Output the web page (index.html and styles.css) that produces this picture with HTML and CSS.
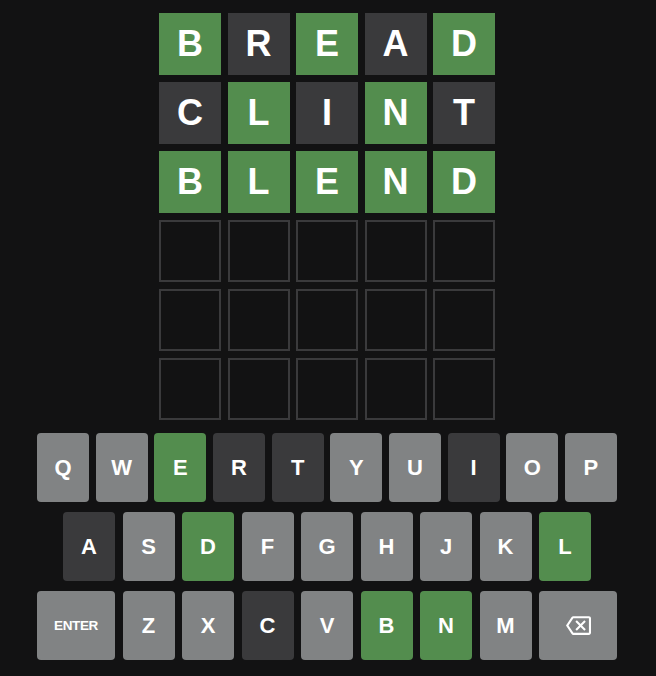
FILE: index.html
```html
<!DOCTYPE html>
<html>
<head>
<meta charset="utf-8">
<link rel="stylesheet" href="styles.css">
</head>
<body>
<div class="app">
  <div class="board">
    <div class="row">
      <div class="tile correct">B</div><div class="tile absent">R</div><div class="tile correct">E</div><div class="tile absent">A</div><div class="tile correct">D</div>
    </div>
    <div class="row">
      <div class="tile absent">C</div><div class="tile correct">L</div><div class="tile absent">I</div><div class="tile correct">N</div><div class="tile absent">T</div>
    </div>
    <div class="row">
      <div class="tile correct">B</div><div class="tile correct">L</div><div class="tile correct">E</div><div class="tile correct">N</div><div class="tile correct">D</div>
    </div>
    <div class="row">
      <div class="tile empty"></div><div class="tile empty"></div><div class="tile empty"></div><div class="tile empty"></div><div class="tile empty"></div>
    </div>
    <div class="row">
      <div class="tile empty"></div><div class="tile empty"></div><div class="tile empty"></div><div class="tile empty"></div><div class="tile empty"></div>
    </div>
    <div class="row">
      <div class="tile empty"></div><div class="tile empty"></div><div class="tile empty"></div><div class="tile empty"></div><div class="tile empty"></div>
    </div>
  </div>
  <div class="keyboard">
    <div class="krow krow1">
      <div class="key">Q</div><div class="key">W</div><div class="key correct">E</div><div class="key absent">R</div><div class="key absent">T</div><div class="key">Y</div><div class="key">U</div><div class="key absent">I</div><div class="key">O</div><div class="key">P</div>
    </div>
    <div class="krow">
      <div class="key absent">A</div><div class="key">S</div><div class="key correct">D</div><div class="key">F</div><div class="key">G</div><div class="key">H</div><div class="key">J</div><div class="key">K</div><div class="key correct">L</div>
    </div>
    <div class="krow">
      <div class="key wide enter">ENTER</div><div class="key">Z</div><div class="key">X</div><div class="key absent">C</div><div class="key">V</div><div class="key correct">B</div><div class="key correct">N</div><div class="key">M</div>
      <div class="key wide">
        <svg class="bksp" viewBox="0 0 24 24" width="25" height="25" aria-hidden="true"><path fill="#ffffff" d="M22 3H7c-.69 0-1.23.35-1.59.88L0 12l5.41 8.11c.36.53.9.89 1.59.89h15c1.1 0 2-.9 2-2V5c0-1.1-.9-2-2-2zm0 16H7.07L2.4 12l4.66-7H22v14zm-11.59-2L14 13.410 17.59 17 19 15.590 15.410 12 19 8.410 17.590 7 14 10.590 10.410 7 9 8.410 12.590 12 9 15.590z"/></svg>
      </div>
    </div>
  </div>
</div>
</body>
</html>
```

FILE: styles.css
```css
html, body {
  margin: 0;
  padding: 0;
  background: #121213;
}
body {
  width: 656px;
  height: 676px;
  overflow: hidden;
  font-family: "Liberation Sans", Arial, sans-serif;
  color: #ffffff;
}
.app {
  width: 580px;
  margin-left: 37px;
  padding-top: 13px;
  display: flex;
  flex-direction: column;
  align-items: center;
}
.board {
  display: flex;
  flex-direction: column;
  gap: 7px;
}
.row {
  display: flex;
  gap: 6.5px;
}
.tile {
  width: 62px;
  height: 62px;
  box-sizing: border-box;
  display: flex;
  align-items: center;
  justify-content: center;
  font-size: 36px;
  font-weight: 700;
  line-height: 1;
  text-transform: uppercase;
}
.tile.correct { background: #538d4e; }
.tile.absent { background: #3a3a3c; }
.tile.empty { border: 2px solid #3a3a3c; }

.keyboard {
  margin-top: 13px;
  width: 580px;
  display: flex;
  flex-direction: column;
  gap: 10px;
}
.krow {
  display: flex;
  justify-content: center;
  gap: 7.5px;
}
.krow1 { gap: 6.667px; }
.key {
  width: 52px;
  height: 69px;
  flex: none;
  border-radius: 4px;
  background: #818384;
  display: flex;
  align-items: center;
  justify-content: center;
  font-size: 22px;
  font-weight: 700;
  color: #ffffff;
}
.key.correct { background: #538d4e; }
.key.absent { background: #3a3a3c; }
.key.wide { width: 78px; }
.key.enter {
  font-size: 13.5px;
  letter-spacing: -0.4px;
}
.bksp { display: block; }
```
